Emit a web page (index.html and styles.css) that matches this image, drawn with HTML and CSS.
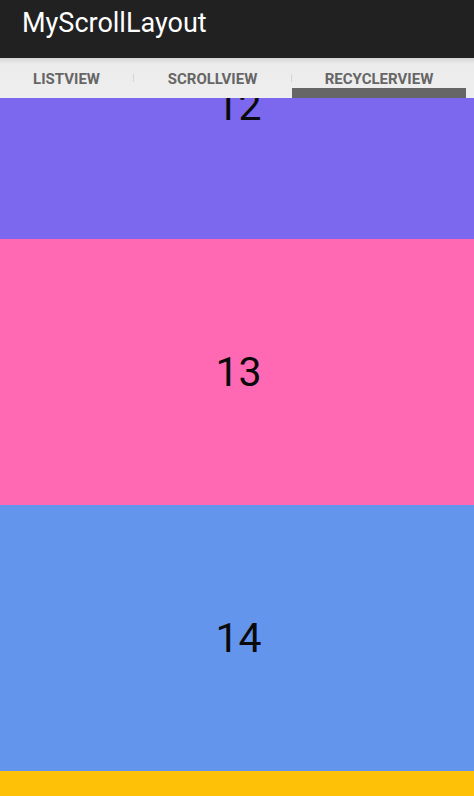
FILE: index.html
```html
<!DOCTYPE html>
<html>
<head>
<meta charset="utf-8">
<link rel="stylesheet" href="styles.css">
</head>
<body>
<div class="screen">
  <header class="appbar"><span class="title">MyScrollLayout</span></header>
  <nav class="tabs">
    <div class="tab tab-list">LISTVIEW</div>
    <div class="sep"></div>
    <div class="tab tab-scroll">SCROLLVIEW</div>
    <div class="sep"></div>
    <div class="tab tab-recycler active">RECYCLERVIEW</div>
  </nav>
  <main class="list">
    <div class="item purple first">12</div>
    <div class="item pink">13</div>
    <div class="item blue">14</div>
    <div class="item yellow">15</div>
  </main>
</div>
</body>
</html>
```
FILE: styles.css
```css
html, body {
  margin: 0;
  padding: 0;
}
body {
  width: 474px;
  height: 796px;
  overflow: hidden;
  font-family: Roboto, "Liberation Sans", sans-serif;
}
.screen {
  display: flex;
  flex-direction: column;
  height: 796px;
}
.appbar {
  height: 58px;
  flex: none;
  background: #212121;
  display: flex;
  align-items: flex-start;
  padding-left: 22px;
  box-sizing: border-box;
}
.title {
  color: #ffffff;
  font-size: 27px;
  line-height: 46px;
}
.tabs {
  height: 40px;
  flex: none;
  display: flex;
  align-items: stretch;
  background: linear-gradient(#d6d6d6 0px, #ececec 6px, #eeeeee 100%);
  padding-right: 8px;
}
.tab {
  display: flex;
  align-items: center;
  justify-content: center;
  padding-top: 1px;
  font-size: 15px;
  font-weight: bold;
  color: #666666;
}
.tab-list { width: 133px; }
.tab-scroll { width: 157px; }
.tab-recycler { width: 174px; }
.tab.active {
  box-shadow: inset 0 -10px 0 #666666;
}
.sep {
  width: 1px;
  height: 8px;
  align-self: center;
  background: #d4d4d4;
}
.list {
  flex: 1;
  overflow: hidden;
  display: flex;
  flex-direction: column;
}
.item {
  height: 266px;
  flex: none;
  display: flex;
  align-items: center;
  justify-content: center;
  padding-left: 3px;
  font-size: 41px;
  color: #0a0a0a;
}
.first { margin-top: -125px; }
.purple { background: #7b68ee; }
.pink { background: #ff69b4; }
.blue { background: #6495ed; }
.yellow { background: #ffc107; }
```
